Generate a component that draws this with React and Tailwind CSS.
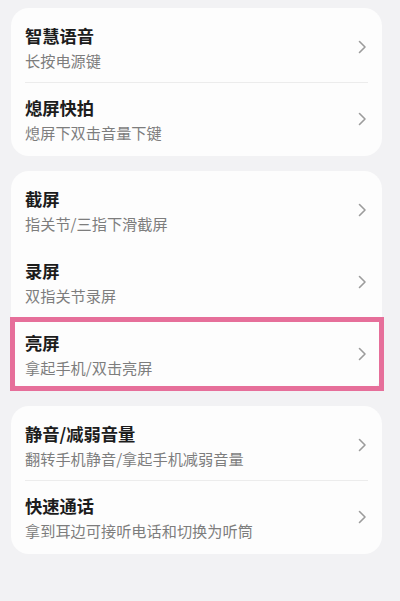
import React from "react";

const font = { fontFamily: '"Noto Sans CJK SC", "Noto Sans", sans-serif' };

function Chevron() {
  return (
    <svg width="10" height="14" viewBox="0 0 10 14" className="shrink-0">
      <path d="M2.5 1.5 L8 7 L2.5 12.5" fill="none" stroke="#9c9c9c" strokeWidth="1.6" strokeLinecap="round" strokeLinejoin="round" />
    </svg>
  );
}

function Row({ title, sub, divider }) {
  return (
    <div className="relative flex items-center pl-[14px] pr-[15px] h-[72px]">
      <div className="flex-1 flex flex-col pt-[1px]">
        <div className="text-[17.3px] leading-[24px] font-bold text-[#1c1c1c]">{title}</div>
        <div className="text-[15.2px] leading-[22px] mt-[1px] text-[#7d7d7d]">{sub}</div>
      </div>
      <Chevron />
      {divider && <div className="absolute left-[14px] right-[14px] bottom-0 h-px bg-[#ececec]" />}
    </div>
  );
}

function Card({ children, className = "" }) {
  return (
    <div className={"relative bg-[#fdfdfd] rounded-[18px] pt-[3px] pb-[1px] " + className}>{children}</div>
  );
}

export default function App() {
  return (
    <div style={font} className="w-[400px] h-[601px] bg-[#f2f2f4] pt-[8px] pl-[11px] pr-[18px] flex flex-col gap-[15px] overflow-hidden">
      <Card>
        <Row title="智慧语音" sub="长按电源键" divider />
        <Row title="熄屏快拍" sub="熄屏下双击音量下键" />
      </Card>
      <Card>
        <Row title="截屏" sub="指关节/三指下滑截屏" />
        <Row title="录屏" sub="双指关节录屏" />
        <Row title="亮屏" sub="拿起手机/双击亮屏" />
        <div className="absolute left-[-1px] right-[-2px] bottom-0 h-[74px] border-[5px] border-[#e66f9a]" />
      </Card>
      <Card>
        <Row title="静音/减弱音量" sub="翻转手机静音/拿起手机减弱音量" divider />
        <Row title="快速通话" sub="拿到耳边可接听电话和切换为听筒" />
      </Card>
    </div>
  );
}
